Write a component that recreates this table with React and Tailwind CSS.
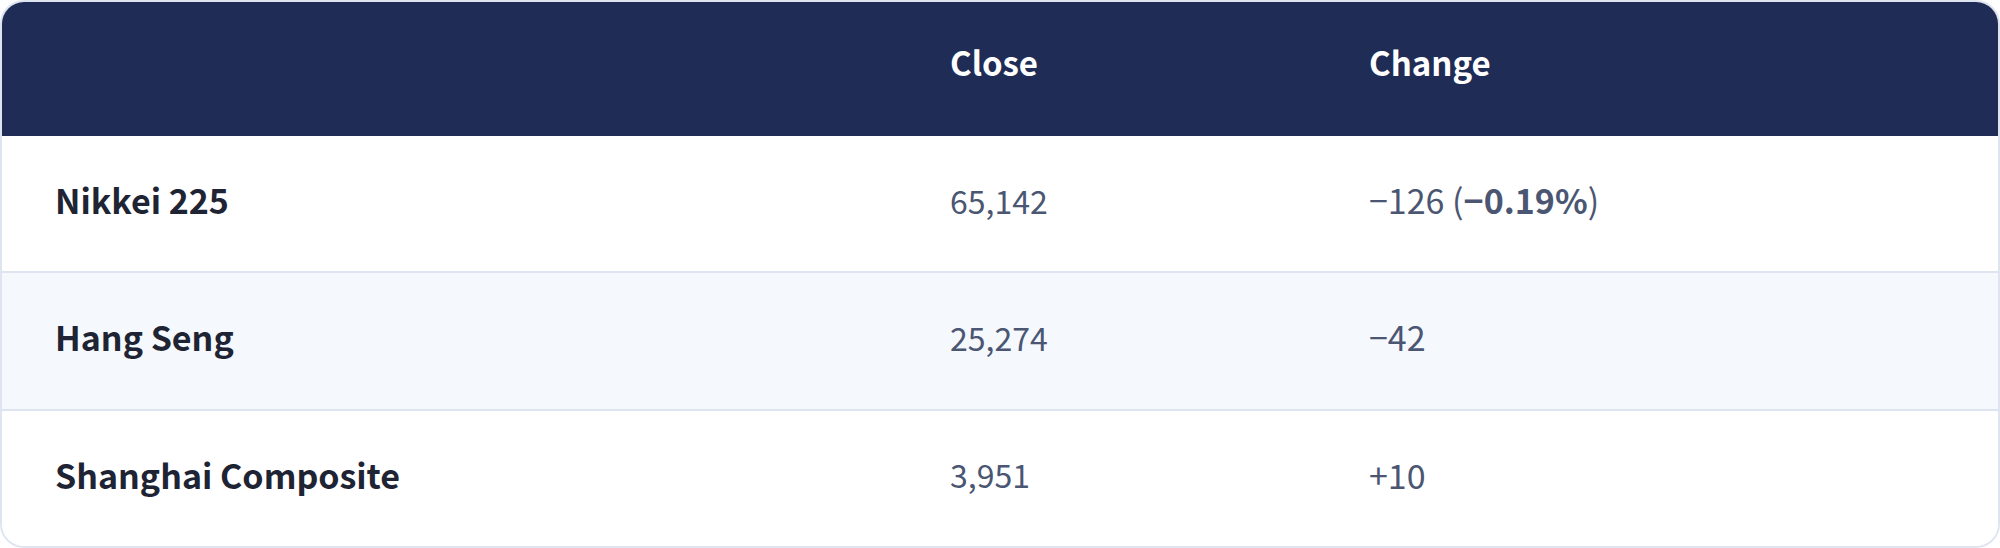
import React from "react";

const rows = [
  { name: "Nikkei 225", close: "65,142", change: "−126", pct: "−0.19%" },
  { name: "Hang Seng", close: "25,274", change: "−42" },
  { name: "Shanghai Composite", close: "3,951", change: "+10" },
];

const App = () => {
  return (
    <div
      className="w-[2000px] h-[548px] bg-white"
      style={{ fontFamily: '"Noto Sans CJK KR", "Noto Sans", sans-serif' }}
    >
      <div className="h-full border-2 border-[#dfe5f0] rounded-[24px] overflow-hidden flex flex-col">
        <div className="h-[134px] bg-[#1f2c55] grid grid-cols-[948px_419px_1fr] items-center text-white font-bold text-[33px] pb-3">
          <div></div>
          <div>Close</div>
          <div>Change</div>
        </div>
        {rows.map((r, i) => (
          <div
            key={r.name}
            className={
              "flex-1 grid grid-cols-[948px_419px_1fr] items-center pb-2 " +
              (i === 1 ? "bg-[#f5f8fd] " : "bg-white ") +
              (i > 0 ? "border-t-2 border-[#dfe5f0]" : "")
            }
          >
            <div className="pl-[53px] text-[34px] font-bold text-[#1e2433]">{r.name}</div>
            <div className="text-[32px] text-[#4a5672]">{r.close}</div>
            <div className="text-[34px] text-[#4a5672]">
              {r.change}
              {r.pct && (
                <>
                  {" ("}
                  <span className="font-bold">{r.pct}</span>
                  {")"}
                </>
              )}
            </div>
          </div>
        ))}
      </div>
    </div>
  );
};

export default App;
